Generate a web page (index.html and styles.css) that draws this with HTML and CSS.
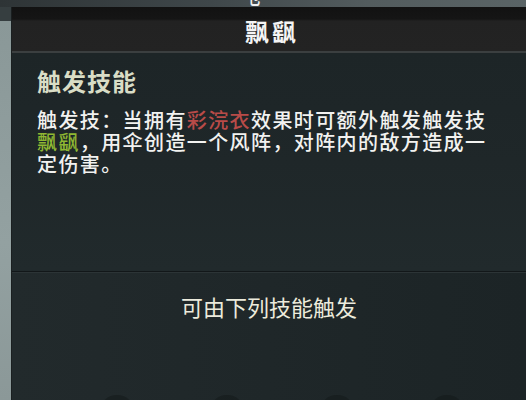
FILE: index.html
```html
<!DOCTYPE html>
<html lang="zh-CN">
<head>
  <meta charset="UTF-8">
  <meta name="viewport" content="width=device-width, initial-scale=1.0">
  <title>飘飖</title>
  <link rel="stylesheet" href="styles.css">
</head>
<body>
  <div class="screen">
    <!-- strip of the window behind -->
    <div class="backdrop"></div>

    <div class="main">
      <div class="edge"></div>

      <div class="panel">
        <!-- Skill title bar -->
        <div class="title-bar">
          <span class="peek">乜</span>
          <h1>飘飖</h1>
        </div>

        <!-- Skill description -->
        <div class="desc">
          <h2>触发技能</h2>
          <p>触发技：当拥有<span class="red">彩浣衣</span>效果时可额外触发触发技<span class="green">飘飖</span>，用伞创造一个风阵，对阵内的敌方造成一定伤害。</p>
        </div>

        <!-- Trigger sources -->
        <div class="trigger">
          <h3>可由下列技能触发</h3>
          <div class="slots">
            <span class="slot"></span>
            <span class="slot"></span>
            <span class="slot"></span>
            <span class="slot"></span>
          </div>
        </div>
      </div>
    </div>
  </div>
</body>
</html>
```

FILE: styles.css
```css
* {
  margin: 0;
  padding: 0;
  box-sizing: border-box;
}

body {
  background-color: #1e2628;
  font-family: "Noto Sans CJK SC", "Noto Sans", sans-serif;
  overflow: hidden;
}

.screen {
  width: 526px;
  height: 400px;
  display: flex;
  flex-direction: column;
  overflow: hidden;
}

/* Top backdrop band */
.backdrop {
  height: 7px;
  background: linear-gradient(to right, #2e3436, #3f474a 40%, #535c5e 70%, #5a6466);
  flex-shrink: 0;
}

.main {
  flex: 1;
  display: flex;
}

.edge {
  width: 12px;
  background: linear-gradient(to bottom, #363e40 0, #363e40 14px, #8a9898 14px, #93a1a1 60%, #8b9898);
  border-right: 1px solid #1a1f20;
  flex-shrink: 0;
}

.panel {
  flex: 1;
  display: flex;
  flex-direction: column;
  background-color: #1f2729;
}

/* Title bar */
.title-bar {
  position: relative;
  height: 46px;
  background: linear-gradient(to bottom, #121212 0, #151515 12px, #222222 14px, #232323);
  border-bottom: 2px solid #3b3f40;
  display: flex;
  justify-content: center;
  align-items: flex-end;
  padding-bottom: 8px;
}

.title-bar h1 {
  color: #f4f4f4;
  font-size: 24px;
  font-weight: 700;
  line-height: 1;
  letter-spacing: 3px;
  margin-left: 6px;
}

.peek {
  position: absolute;
  top: -19px;
  left: 233px;
  color: #f0f0f0;
  font-size: 18px;
  font-weight: 700;
  line-height: 1;
  transform: scaleX(0.7);
}

/* Description */
.desc {
  height: 219px;
  padding: 14px 20px 0 25px;
  border-bottom: 1px solid #121719;
  background: linear-gradient(to bottom, #1d2527, #1f2729 50%, #212a2c);
}

.desc h2 {
  color: #d9ddc6;
  font-size: 24px;
  font-weight: 700;
  letter-spacing: 1px;
  line-height: 28px;
  margin-bottom: 14px;
}

.desc p {
  width: 462px;
  color: #f2f2f0;
  font-size: 20px;
  font-weight: 500;
  line-height: 22px;
  letter-spacing: 1.4px;
}

.red {
  color: #b84b48;
}

.green {
  color: #8fb832;
}

/* Trigger list */
.trigger {
  flex: 1;
  border-top: 1px solid #2c3436;
  background: linear-gradient(to right, #222a2c, #1f2729 50%, #1c2426);
  display: flex;
  flex-direction: column;
  align-items: center;
  padding-top: 20px;
}

.trigger h3 {
  color: #ecebdc;
  font-size: 22px;
  font-weight: 400;
  line-height: 1.2;
}

.slots {
  margin-top: auto;
  display: flex;
  gap: 74px;
  margin-left: 25px;
  height: 5px;
  overflow: hidden;
}

.slot {
  width: 36px;
  height: 36px;
  border-radius: 50%;
  background-color: #121718;
  opacity: 0.5;
}
```
